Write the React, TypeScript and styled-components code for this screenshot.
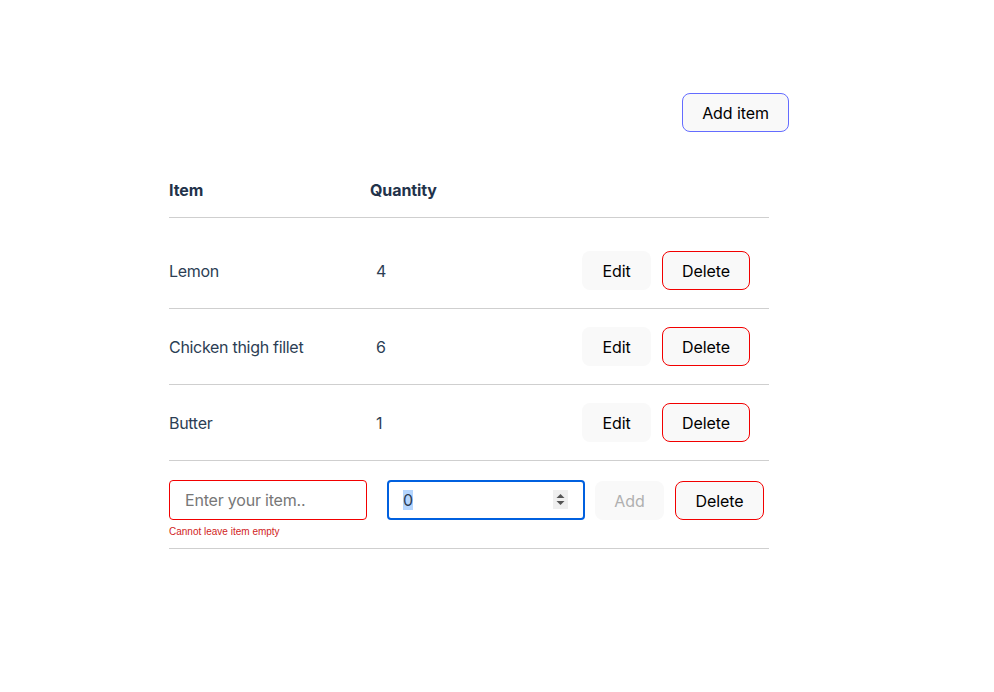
import React, { useEffect, useRef } from "react";
import styled, { createGlobalStyle } from "styled-components";

const Global = createGlobalStyle`
  html, body { margin: 0; padding: 0; background: #ffffff; }
  body { font-family: Inter, "Noto Sans", "Liberation Sans", sans-serif; color: #213547; }
  * { box-sizing: border-box; }
`;

const Page = styled.main`
  padding: 93px 0 0 169px;
  width: 789px;
`;

const Toolbar = styled.div`
  width: 620px;
  display: flex;
  justify-content: flex-end;
`;

const Button = styled.button<{ $tone?: "plain" | "danger" | "accent"; $w: number }>`
  height: 39px;
  width: ${(p) => p.$w}px;
  padding: 0;
  border-radius: 8px;
  border: 1px solid
    ${(p) => (p.$tone === "danger" ? "#f20000" : p.$tone === "accent" ? "#646cff" : "transparent")};
  background: #f9f9f9;
  color: #000;
  font-family: inherit;
  font-size: 16px;
  font-weight: 400;
  letter-spacing: -0.1px;
  line-height: 1;
  cursor: pointer;
  &:disabled { color: #b0b0b0; cursor: default; }
`;

const Table = styled.div`
  width: 600px;
  margin-top: 46px;
`;

const HeadRow = styled.div`
  display: flex;
  align-items: center;
  height: 40px;
  padding-bottom: 16px;
  border-bottom: 1px solid #cfcfcf;
  font-weight: 700;
  font-size: 16px;
  line-height: 24px;
  color: #22324a;
  letter-spacing: -0.1px;
`;

const HeadCell = styled.div<{ $w?: number }>`
  width: ${(p) => (p.$w ? `${p.$w}px` : "auto")};
`;

const Row = styled.div<{ $first?: boolean }>`
  display: flex;
  align-items: center;
  padding: ${(p) => (p.$first ? "33px" : "18px")} 19px 18px 0;
  border-bottom: 1px solid #cfcfcf;
  font-size: 16px;
  letter-spacing: -0.3px;
  color: #2c3e54;
`;

const NameCell = styled.div`
  width: 207px;
`;

const QtyCell = styled.div`
  flex: 1;
`;

const Actions = styled.div<{ $gap: number }>`
  display: flex;
  gap: ${(p) => p.$gap}px;
`;

const FormRow = styled.div`
  display: flex;
  align-items: flex-start;
  gap: 20px;
  padding: 19px 0 10px;
  border-bottom: 1px solid #cfcfcf;
`;

const Field = styled.div`
  display: flex;
  flex-direction: column;
  width: 198px;
`;

const TextInput = styled.input`
  width: 198px;
  height: 40px;
  border: 1px solid #f20000;
  border-radius: 4px;
  padding: 0 15px;
  font-family: inherit;
  font-size: 16px;
  letter-spacing: -0.2px;
  color: #2c3e54;
  outline: none;
  &::placeholder { color: #777; }
`;

const ErrorText = styled.div`
  margin-top: 6px;
  font-size: 10px;
  line-height: 12px;
  color: #d11d1d;
  font-family: "Liberation Sans", Inter, sans-serif;
`;

const NumberWrap = styled.div`
  position: relative;
  width: 198px;
  height: 40px;
`;

const NumberInput = styled.input`
  width: 100%;
  height: 100%;
  border: 2px solid #0060df;
  border-radius: 4px;
  padding: 0 40px 0 14px;
  font-family: inherit;
  font-size: 16px;
  color: #2c3e54;
  outline: none;
  &::selection { background: #b4d5fe; color: #2c3e54; }
`;

const Spinner = styled.svg`
  position: absolute;
  right: 17px;
  top: 10px;
  width: 15px;
  height: 19px;
  pointer-events: none;
`;

const FormActions = styled.div`
  display: flex;
  gap: 11px;
  margin-left: -10px;
  padding-top: 1px;
`;

const items = [
  { name: "Lemon", qty: 4 },
  { name: "Chicken thigh fillet", qty: 6 },
  { name: "Butter", qty: 1 },
];

export default function App() {
  const numRef = useRef<HTMLInputElement>(null);
  useEffect(() => {
    const el = numRef.current;
    if (el) {
      el.focus();
      el.setSelectionRange(0, 1);
    }
  }, []);
  return (
    <>
      <Global />
      <Page>
        <Toolbar>
          <Button $tone="accent" $w={107}>Add item</Button>
        </Toolbar>
        <Table>
          <HeadRow>
            <HeadCell $w={201}>Item</HeadCell>
            <HeadCell>Quantity</HeadCell>
          </HeadRow>
          {items.map((it, i) => (
            <Row key={it.name} $first={i === 0}>
              <NameCell>{it.name}</NameCell>
              <QtyCell>{it.qty}</QtyCell>
              <Actions $gap={11}>
                <Button $w={69}>Edit</Button>
                <Button $tone="danger" $w={88}>Delete</Button>
              </Actions>
            </Row>
          ))}
          <FormRow>
            <Field>
              <TextInput placeholder="Enter your item.." />
              <ErrorText>Cannot leave item empty</ErrorText>
            </Field>
            <NumberWrap>
              <NumberInput ref={numRef} type="text" defaultValue="0" />
              <Spinner viewBox="0 0 15 19">
                <rect width="15" height="19" fill="#efefef" />
                <path d="M3.5 8 L7.5 4 L11.5 8 Z" fill="#555" />
                <path d="M3.5 11 L7.5 15 L11.5 11 Z" fill="#555" />
              </Spinner>
            </NumberWrap>
            <FormActions>
              <Button $w={69} disabled>Add</Button>
              <Button $tone="danger" $w={89}>Delete</Button>
            </FormActions>
          </FormRow>
        </Table>
      </Page>
    </>
  );
}
